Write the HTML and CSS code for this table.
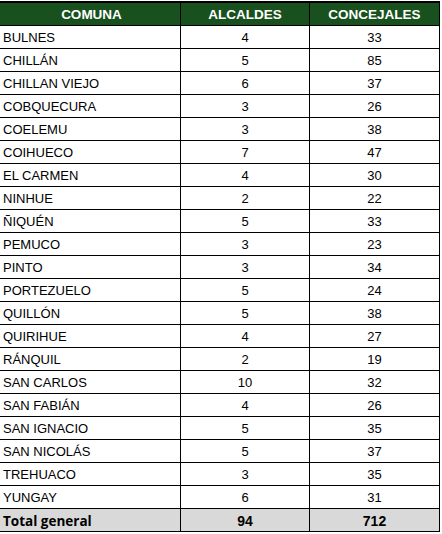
FILE: index.html
```html
<!DOCTYPE html>
<html lang="es">
<head>
<meta charset="utf-8">
<title>Comunas</title>
<link rel="stylesheet" href="styles.css">
</head>
<body>
<div class="sheet">
  <div class="row head">
    <div class="c c1">COMUNA</div>
    <div class="c c2">ALCALDES</div>
    <div class="c c3">CONCEJALES</div>
  </div>
  <div class="row"><div class="c c1">BULNES</div><div class="c c2">4</div><div class="c c3">33</div></div>
  <div class="row"><div class="c c1">CHILLÁN</div><div class="c c2">5</div><div class="c c3">85</div></div>
  <div class="row"><div class="c c1">CHILLAN VIEJO</div><div class="c c2">6</div><div class="c c3">37</div></div>
  <div class="row"><div class="c c1">COBQUECURA</div><div class="c c2">3</div><div class="c c3">26</div></div>
  <div class="row"><div class="c c1">COELEMU</div><div class="c c2">3</div><div class="c c3">38</div></div>
  <div class="row"><div class="c c1">COIHUECO</div><div class="c c2">7</div><div class="c c3">47</div></div>
  <div class="row"><div class="c c1">EL CARMEN</div><div class="c c2">4</div><div class="c c3">30</div></div>
  <div class="row"><div class="c c1">NINHUE</div><div class="c c2">2</div><div class="c c3">22</div></div>
  <div class="row"><div class="c c1">ÑIQUÉN</div><div class="c c2">5</div><div class="c c3">33</div></div>
  <div class="row"><div class="c c1">PEMUCO</div><div class="c c2">3</div><div class="c c3">23</div></div>
  <div class="row"><div class="c c1">PINTO</div><div class="c c2">3</div><div class="c c3">34</div></div>
  <div class="row"><div class="c c1">PORTEZUELO</div><div class="c c2">5</div><div class="c c3">24</div></div>
  <div class="row"><div class="c c1">QUILLÓN</div><div class="c c2">5</div><div class="c c3">38</div></div>
  <div class="row"><div class="c c1">QUIRIHUE</div><div class="c c2">4</div><div class="c c3">27</div></div>
  <div class="row"><div class="c c1">RÁNQUIL</div><div class="c c2">2</div><div class="c c3">19</div></div>
  <div class="row"><div class="c c1">SAN CARLOS</div><div class="c c2">10</div><div class="c c3">32</div></div>
  <div class="row"><div class="c c1">SAN FABIÁN</div><div class="c c2">4</div><div class="c c3">26</div></div>
  <div class="row"><div class="c c1">SAN IGNACIO</div><div class="c c2">5</div><div class="c c3">35</div></div>
  <div class="row"><div class="c c1">SAN NICOLÁS</div><div class="c c2">5</div><div class="c c3">37</div></div>
  <div class="row"><div class="c c1">TREHUACO</div><div class="c c2">3</div><div class="c c3">35</div></div>
  <div class="row"><div class="c c1">YUNGAY</div><div class="c c2">6</div><div class="c c3">31</div></div>
  <div class="row total"><div class="c c1">Total general</div><div class="c c2">94</div><div class="c c3">712</div></div>
</div>
</body>
</html>
```
FILE: styles.css
```css
html, body {
  margin: 0;
  padding: 0;
  background: #ffffff;
}
body {
  font-family: "Liberation Sans", Arial, sans-serif;
  font-size: 13px;
  color: #000;
}
.sheet {
  width: 440px;
  padding-top: 1px;
}
.row {
  display: flex;
  height: 22px;
  border-bottom: 1px solid #000;
}
.c {
  display: flex;
  align-items: center;
  justify-content: center;
  border-right: 1px solid #000;
  padding-top: 1px;
  box-sizing: border-box;
  white-space: nowrap;
}
.c1 {
  width: 181px;
  justify-content: flex-start;
  padding-left: 3px;
}
.c2 { width: 129px; }
.c3 { width: 130px; }
.head {
  border-top: 2px solid #000;
  background: #18501e;
  color: #ffffff;
  font-weight: bold;
  font-size: 13.5px;
}
.head .c1 { justify-content: center; }
.total {
  background: #d9d9d9;
  font-weight: bold;
  font-size: 14px;
}
.total .c1 {
  font-family: "Open Sans", "Liberation Sans", sans-serif;
  font-size: 13.5px;
}
```
